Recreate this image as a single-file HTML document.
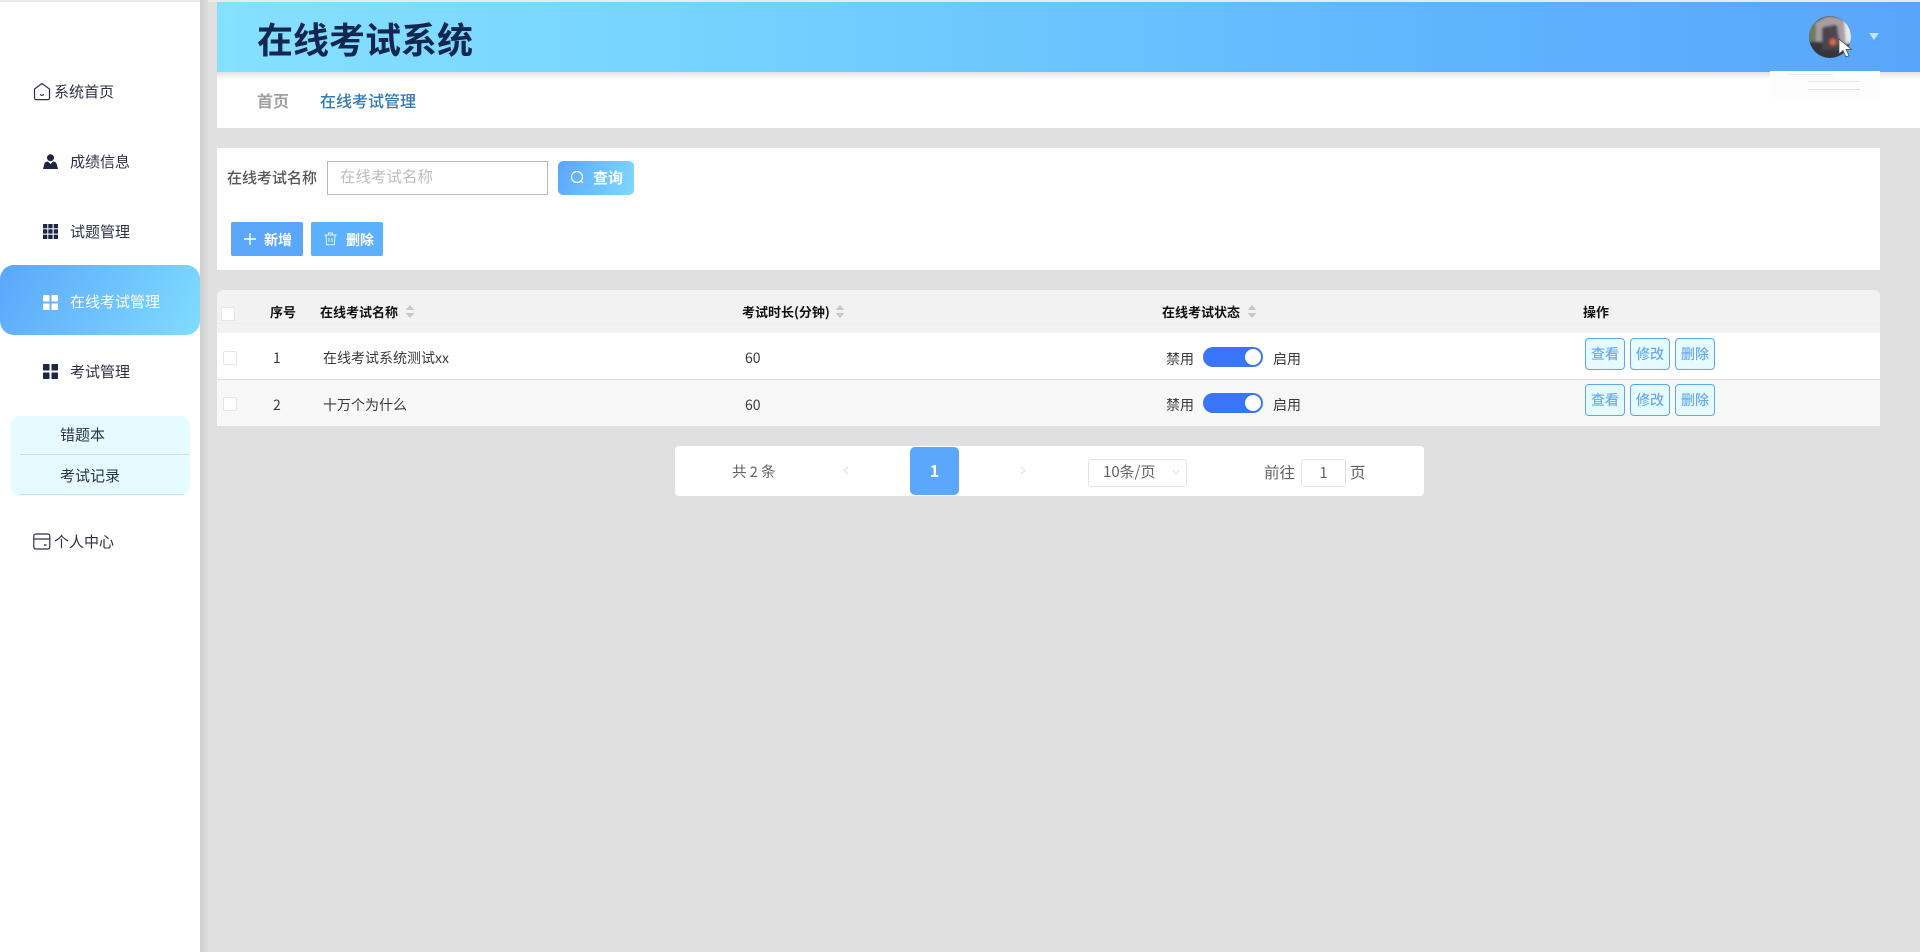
<!DOCTYPE html>
<html lang="zh"><head><meta charset="utf-8"><title>在线考试系统</title>
<style>
*{box-sizing:border-box}
html,body{margin:0;padding:0;width:1920px;height:952px;overflow:hidden;background:#e0e0e0;font-family:"Noto Sans CJK SC","Liberation Sans",sans-serif;color:#333}
.a{position:absolute}
.t{position:absolute;white-space:nowrap;line-height:20px;height:20px}
.nav{font-size:15px;color:#2c3145}
.th{font-size:13px;font-weight:700;color:#111}
.td{font-size:14px;color:#3a3a3a}
.cb{position:absolute;width:14px;height:14px;background:#fff;border:1px solid #e6e6e6;border-radius:2px}
.op{position:absolute;width:40px;height:32px;border:1px solid #5aa7fa;border-radius:4px;background:#e6fbff;color:#69aaf0;font-size:14px;font-weight:500;text-align:center;line-height:31px}
.sw{position:absolute;width:60px;height:20px;border-radius:10px;background:#3a74f8}
.sw i{position:absolute;right:2px;top:2px;width:16px;height:16px;border-radius:50%;background:#fff}
.sort{position:absolute;width:10px;height:13px}
</style></head><body>
<div class="a" style="left:0;top:0;width:1920px;height:2px;background:#eaeaea"></div>

<!-- sidebar -->
<div class="a" style="left:200px;top:0;width:8px;height:952px;background:linear-gradient(90deg,#cdcdcd,#dcdcdc)"></div>
<div class="a" style="left:0;top:2px;width:200px;height:950px;background:#fff"></div>

<svg class="a" style="left:33px;top:82px" width="18" height="19" viewBox="0 0 18 19" fill="none" stroke="#2c3145" stroke-width="1.2"><path d="M1.5 7 9 1.5 16.500 7V16a1.600 1.600 0 0 1-1.600 1.600H3.100A1.600 1.600 0 0 1 1.500 16z"/><path d="M7 12.500q2 1.500 4 0" stroke-width="1.300"/></svg>
<div class="t nav" style="left:54px;top:82px">系统首页</div>

<svg class="a" style="left:43px;top:154px" width="15" height="15" viewBox="0 0 15 15" fill="#1f2645"><circle cx="7.500" cy="3.700" r="3.500"/><path d="M0 15 1.500 9.500Q2.500 7.500 5 7.500L7.500 10 10 7.500Q12.500 7.500 13.500 9.500L15 15z"/></svg>
<div class="t nav" style="left:70px;top:152px">成绩信息</div>

<svg class="a" style="left:43px;top:224px" width="15" height="15" viewBox="0 0 15 15" fill="#1f2645"><rect width="4.300" height="4.300"/><rect x="5.300" width="4.300" height="4.300"/><rect x="10.700" width="4.300" height="4.300"/><rect y="5.300" width="4.300" height="4.300"/><rect x="5.300" y="5.300" width="4.300" height="4.300"/><rect x="10.700" y="5.300" width="4.300" height="4.300"/><rect y="10.700" width="4.300" height="4.300"/><rect x="5.300" y="10.700" width="4.300" height="4.300"/><rect x="10.700" y="10.700" width="4.300" height="4.300"/></svg>
<div class="t nav" style="left:70px;top:222px">试题管理</div>

<div class="a" style="left:0;top:265px;width:200px;height:70px;border-radius:14px;background:linear-gradient(120deg,#5aa6fb,#80dcff)"></div>
<svg class="a" style="left:43px;top:295px" width="15" height="15" viewBox="0 0 15 15" fill="#fff"><rect width="6.500" height="6.500" rx=".6"/><rect x="8.500" width="6.500" height="6.500" rx=".6"/><rect y="8.500" width="6.500" height="6.500" rx=".6"/><rect x="8.500" y="8.500" width="6.500" height="6.500" rx=".6"/></svg>
<div class="t nav" style="left:70px;top:292px;color:#fff">在线考试管理</div>

<svg class="a" style="left:43px;top:364px" width="15" height="15" viewBox="0 0 15 15" fill="#1f2645"><rect width="6.500" height="6.500" rx=".6"/><rect x="8.500" width="6.500" height="6.500" rx=".6"/><rect y="8.500" width="6.500" height="6.500" rx=".6"/><rect x="8.500" y="8.500" width="6.500" height="6.500" rx=".6"/></svg>
<div class="t nav" style="left:70px;top:362px">考试管理</div>

<div class="a" style="left:10px;top:416px;width:180px;height:80px;background:#e6fbff;border-radius:10px 10px 10px 10px"></div>
<div class="a" style="left:20px;top:454px;width:170px;height:1px;background:#cfdde8"></div>
<div class="a" style="left:20px;top:494px;width:164px;height:1px;background:#cfdde8"></div>
<div class="t" style="left:60px;top:425px;font-size:15px;color:#2c3145">错题本</div>
<div class="t" style="left:60px;top:466px;font-size:15px;color:#2c3145">考试记录</div>

<svg class="a" style="left:33px;top:533px" width="18" height="17" viewBox="0 0 18 17" fill="none" stroke="#2c3145" stroke-width="1.200"><rect x=".8" y="1" width="16" height="15" rx="2"/><path d="M.8 6h16"/><path d="M11 12h2.500" stroke-width="1.400"/></svg>
<div class="t nav" style="left:54px;top:532px">个人中心</div>

<!-- header -->
<div class="a" style="left:217px;top:72px;width:1703px;height:56px;background:#fff"></div>
<div class="a" style="left:217px;top:72px;width:1703px;height:7px;background:linear-gradient(#e0e0e0,#fff)"></div>
<div class="a" style="left:217px;top:2px;width:1703px;height:70px;background:linear-gradient(90deg,#86e0ff 0%,#74d2ff 30%,#5fb2fd 75%,#58a6fc 100%)"></div>
<div class="t" style="left:257px;top:12px;height:52px;line-height:52px;font-size:36px;font-weight:700;color:#11274f">在线考试系统</div>

<svg class="a" style="left:1809px;top:16px" width="42" height="42" viewBox="0 0 42 42"><defs><clipPath id="c"><circle cx="21" cy="21" r="21"/></clipPath><filter id="b"><feGaussianBlur stdDeviation="1.400"/></filter></defs><g clip-path="url(#c)"><rect width="42" height="42" fill="#36343e"/><g filter="url(#b)"><rect x="-2" y="0" width="9" height="26" fill="#6f7a5e"/><rect x="34" y="4" width="10" height="24" fill="#e6e8ec"/><path d="M7 6Q20-5 35 4L37 30 31 34 28 10Q16 6 13 26L7 26z" fill="#a59ea2"/><path d="M13 12Q19 8 28 12L29 34H13z" fill="#4c444c"/><ellipse cx="24" cy="26" rx="3.500" ry="3.500" fill="#d06a4a"/></g></g></svg>
<svg class="a" style="left:1838px;top:38px" width="16" height="20" viewBox="0 0 16 20"><path d="M1 1v15l4-3.500L8 19l3-1.300-3-6.200h5.500z" fill="#fff" stroke="#444" stroke-width=".7"/></svg>
<svg class="a" style="left:1869px;top:33px" width="10" height="7" viewBox="0 0 10 7"><path d="M0 0h10L5 7z" fill="#c4e2fd"/></svg>

<!-- faded dropdown -->
<div class="a" style="left:1770px;top:71px;width:110px;height:26px;background:#fcfcfc"></div>
<div class="a" style="left:1788px;top:74px;width:45px;height:1px;background:#ececec"></div>
<div class="a" style="left:1808px;top:81px;width:52px;height:1px;background:#e8e8e8"></div>
<div class="a" style="left:1808px;top:89px;width:52px;height:1px;background:#e0e0e0"></div>

<!-- breadcrumb -->
<div class="t" style="left:257px;top:90px;font-size:16px;font-weight:700;color:#a0a0a0">首页</div>
<div class="t" style="left:320px;top:90px;font-size:16px;font-weight:500;color:#2e78b8">在线考试管理</div>

<!-- search panel -->
<div class="a" style="left:217px;top:148px;width:1663px;height:122px;background:#fff"></div>
<div class="t" style="left:227px;top:168px;font-size:15px;font-weight:500;color:#555">在线考试名称</div>
<div class="a" style="left:327px;top:161px;width:221px;height:34px;border:1px solid #b8b8b8;background:#fff"></div>
<div class="t" style="left:340px;top:166px;font-size:15.500px;color:#bdbdbd">在线考试名称</div>
<div class="a" style="left:558px;top:161px;width:76px;height:34px;border-radius:5px;background:linear-gradient(110deg,#5aa6fb,#7fd8ff)"></div>
<svg class="a" style="left:570px;top:170px" width="15" height="15" viewBox="0 0 15 15" fill="none" stroke="#fff" stroke-width="1.200"><circle cx="7" cy="7" r="5.500"/><path d="M11 11l2 2"/></svg>
<div class="t" style="left:593px;top:168px;font-size:15px;font-weight:700;color:#fff">查询</div>

<div class="a" style="left:231px;top:222px;width:72px;height:34px;background:#59a6fb;border-radius:2px"></div>
<svg class="a" style="left:243px;top:232px" width="14" height="14" viewBox="0 0 14 14" stroke="#fff" stroke-width="1.400"><path d="M7 1v12M1 7h12"/></svg>
<div class="t" style="left:264px;top:230px;font-size:14px;font-weight:700;color:#fff">新增</div>
<div class="a" style="left:311px;top:222px;width:72px;height:34px;background:#5cb0fd;border-radius:2px"></div>
<svg class="a" style="left:324px;top:232px" width="13" height="14" viewBox="0 0 13 14" fill="none" stroke="#e4f4ff" stroke-width="1"><path d="M.5 3h12M4.500 3V1h4v2M2 3l.6 9.800h7.800L11 3M5 6v4M8 6v4"/></svg>
<div class="t" style="left:346px;top:230px;font-size:14px;font-weight:700;color:#fff">删除</div>

<!-- table -->
<div class="a" style="left:217px;top:290px;width:1663px;height:43px;background:#f2f2f2;border-radius:6px 6px 0 0"></div>
<div class="a" style="left:217px;top:323px;width:1663px;height:1px;background:#eeeeee"></div>
<div class="a" style="left:217px;top:333px;width:1663px;height:46px;background:#fff"></div>
<div class="a" style="left:217px;top:379px;width:1663px;height:1px;background:#dedede"></div>
<div class="a" style="left:217px;top:380px;width:1663px;height:46px;background:#f8f8f8"></div>
<div class="cb" style="left:221px;top:307px"></div>
<div class="cb" style="left:223px;top:351px"></div>
<div class="cb" style="left:223px;top:397px"></div>

<div class="t th" style="left:270px;top:302px">序号</div>
<div class="t th" style="left:320px;top:302px">在线考试名称</div>
<svg class="sort" style="left:405px;top:305px" viewBox="0 0 10 13" fill="#c8c8c8"><path d="M5 0l4.500 5h-9zM5 13 .5 8h9z"/></svg>
<div class="t th" style="left:742px;top:302px">考试时长(分钟)</div>
<svg class="sort" style="left:835px;top:305px" viewBox="0 0 10 13" fill="#c8c8c8"><path d="M5 0l4.500 5h-9zM5 13 .5 8h9z"/></svg>
<div class="t th" style="left:1162px;top:302px">在线考试状态</div>
<svg class="sort" style="left:1247px;top:305px" viewBox="0 0 10 13" fill="#c8c8c8"><path d="M5 0l4.500 5h-9zM5 13 .5 8h9z"/></svg>
<div class="t th" style="left:1583px;top:302px">操作</div>

<div class="t td" style="left:273px;top:348px">1</div>
<div class="t td" style="left:323px;top:348px">在线考试系统测试xx</div>
<div class="t td" style="left:745px;top:348px">60</div>
<div class="t td" style="left:1166px;top:349px">禁用</div>
<div class="sw" style="left:1203px;top:347px"><i></i></div>
<div class="t td" style="left:1273px;top:349px">启用</div>
<div class="op" style="left:1585px;top:338px">查看</div>
<div class="op" style="left:1630px;top:338px">修改</div>
<div class="op" style="left:1675px;top:338px">删除</div>

<div class="t td" style="left:273px;top:395px">2</div>
<div class="t td" style="left:323px;top:395px">十万个为什么</div>
<div class="t td" style="left:745px;top:395px">60</div>
<div class="t td" style="left:1166px;top:395px">禁用</div>
<div class="sw" style="left:1203px;top:393px"><i></i></div>
<div class="t td" style="left:1273px;top:395px">启用</div>
<div class="op" style="left:1585px;top:384px">查看</div>
<div class="op" style="left:1630px;top:384px">修改</div>
<div class="op" style="left:1675px;top:384px">删除</div>

<!-- pagination -->
<div class="a" style="left:675px;top:446px;width:749px;height:50px;background:#fff;border-radius:4px"></div>
<div class="t" style="left:732px;top:462px;font-size:14.500px;color:#606266">共 2 条</div>
<svg class="a" style="left:843px;top:466px" width="6" height="9" viewBox="0 0 7 11" fill="none" stroke="#d4d7dc"><path d="M6 1 1 5.500 6 10"/></svg>
<div class="a" style="left:910px;top:447px;width:49px;height:48px;background:#5aa7fd;border-radius:5px;color:#fff;font-size:16px;font-weight:700;text-align:center;line-height:47px">1</div>
<svg class="a" style="left:1020px;top:466px" width="6" height="9" viewBox="0 0 7 11" fill="none" stroke="#d4d7dc"><path d="M1 1 6 5.500 1 10"/></svg>
<div class="a" style="left:1088px;top:459px;width:99px;height:28px;border:1px solid #e2e4e8;border-radius:3px;background:#fff"></div>
<div class="t" style="left:1103px;top:462px;font-size:15px;color:#606266">10条/页</div>
<svg class="a" style="left:1172px;top:470px" width="8" height="5" viewBox="0 0 9 6" fill="none" stroke="#d4d7dc"><path d="M1 1l3.500 4L8 1"/></svg>
<div class="t" style="left:1264px;top:462px;font-size:15.500px;color:#606266">前往</div>
<div class="a" style="left:1301px;top:459px;width:45px;height:28px;border:1px solid #e2e4e8;border-radius:3px;background:#fff;text-align:center;font-size:15px;line-height:26px;color:#606266">1</div>
<div class="t" style="left:1350px;top:462px;font-size:15.500px;color:#606266">页</div>
</body></html>
